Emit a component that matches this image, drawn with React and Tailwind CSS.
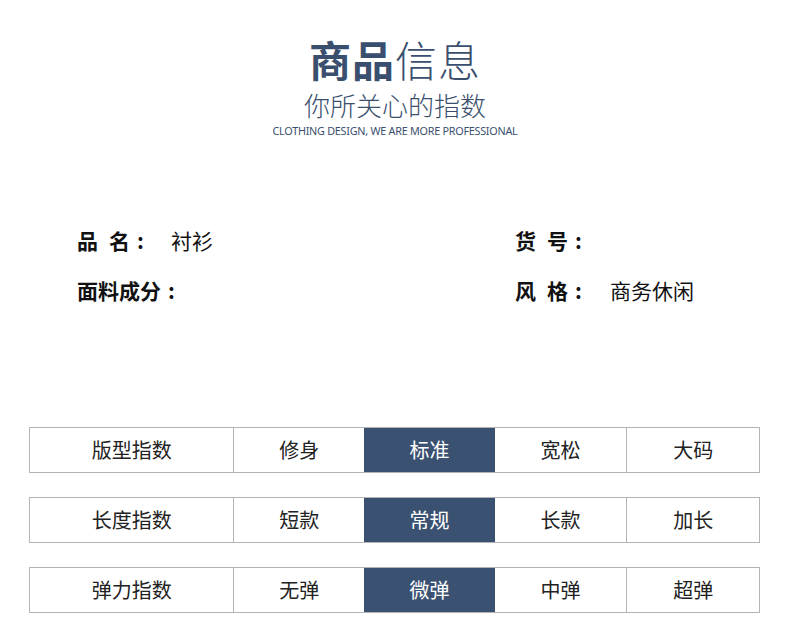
import React from "react";

const rows = [
  { name: "版型指数", opts: ["修身", "标准", "宽松", "大码"], active: 1 },
  { name: "长度指数", opts: ["短款", "常规", "长款", "加长"], active: 1 },
  { name: "弹力指数", opts: ["无弹", "微弹", "中弹", "超弹"], active: 1 },
];

const optWidths = ["w-[131px]", "w-[131px]", "w-[132px]", "w-[133px]"];

function Label({ chars, width }) {
  return (
    <span className={"flex items-center text-[21px] font-bold " + width}>
      {chars.map((c, i) => (
        <span key={i} className={i > 0 && chars.length === 2 ? "ml-[11px]" : ""}>
          {c}
        </span>
      ))}
      <span className="ml-[7px]">:</span>
    </span>
  );
}

export default function App() {
  return (
    <div
      className="w-[790px] h-[635px] bg-white overflow-hidden"
      style={{ fontFamily: '"Noto Sans CJK SC", "Noto Sans", sans-serif' }}
    >
      {/* 标题 */}
      <div className="flex flex-col items-center pt-[30px] text-[#3a4f6e]">
        <h1 className="text-[42px] leading-[58px] tracking-[1px]">
          <span className="font-bold">商品</span>
          <span className="font-light">信息</span>
        </h1>
        <p className="text-[26px] leading-[32px] font-light mt-[1px]">你所关心的指数</p>
        <p className="text-[10.8px] leading-[14px] tracking-[-0.25px] mt-[3px]" style={{ fontFamily: '"Noto Sans", sans-serif' }}>
          CLOTHING DESIGN, WE ARE MORE PROFESSIONAL
        </p>
      </div>

      {/* 商品属性 */}
      <div className="grid grid-cols-[438px_1fr] pl-[77px] mt-[87px] gap-y-[18px] text-[#111]">
        <div className="flex items-center h-[32px]">
          <Label chars={["品", "名"]} width="w-[94px]" />
          <span className="text-[21px]">衬衫</span>
        </div>
        <div className="flex items-center h-[32px]">
          <Label chars={["货", "号"]} width="w-[95px]" />
        </div>
        <div className="flex items-center h-[32px]">
          <Label chars={["面", "料", "成", "分"]} width="" />
        </div>
        <div className="flex items-center h-[32px]">
          <Label chars={["风", "格"]} width="w-[95px]" />
          <span className="text-[21px]">商务休闲</span>
        </div>
      </div>

      {/* 指数表 */}
      <div className="flex flex-col gap-[24px] ml-[29px] mt-[120px]">
        {rows.map((r) => (
          <div key={r.name} className="flex w-[731px] h-[46px] border border-[#b4b4b4]">
            <div className="w-[204px] flex items-center justify-center text-[20px] text-[#222]">{r.name}</div>
            {r.opts.map((o, i) => (
              <div
                key={o}
                className={
                  "flex items-center justify-center text-[20px] " +
                  optWidths[i] +
                  " " +
                  (i === r.active ? "bg-[#3b5172] text-white" : "border-l border-[#b4b4b4] text-[#222]") +
                  (i === r.active + 1 ? " border-l-0" : "")
                }
              >
                {o}
              </div>
            ))}
          </div>
        ))}
      </div>
    </div>
  );
}
